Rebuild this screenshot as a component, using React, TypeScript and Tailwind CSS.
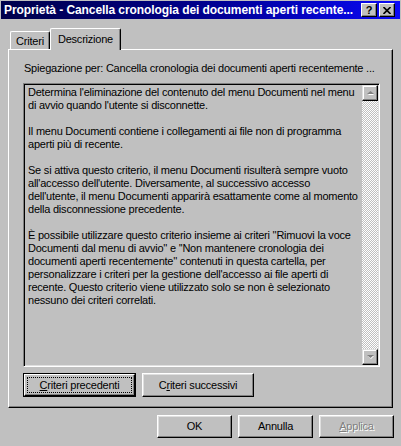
import type { ReactNode } from "react";

const lines = [
    "Determina l'eliminazione del contenuto del menu Documenti nel menu",
    "di avvio quando l'utente si disconnette.",
    "",
    "Il menu Documenti contiene i collegamenti ai file non di programma",
    "aperti più di recente.",
    "",
    "Se si attiva questo criterio, il menu Documenti risulterà sempre vuoto",
    "all'accesso dell'utente. Diversamente, al successivo accesso",
    "dell'utente, il menu Documenti apparirà esattamente come al momento",
    "della disconnessione precedente.",
    "",
    "È possibile utilizzare questo criterio insieme ai criteri ''Rimuovi la voce",
    "Documenti dal menu di avvio'' e ''Non mantenere cronologia dei",
    "documenti aperti recentemente'' contenuti in questa cartella, per",
    "personalizzare i criteri per la gestione dell'accesso ai file aperti di",
    "recente. Questo criterio viene utilizzato solo se non è selezionato",
    "nessuno dei criteri correlati.",
];

function Button({
    children,
    width,
    height,
    isDefault = false,
}: {
    children: ReactNode;
    width: string;
    height: string;
    isDefault?: boolean;
}) {
    if (isDefault) {
        return (
            <div className={`${width} ${height} border border-black`}>
                <div className="h-full w-full border-t border-l border-white border-r border-b border-r-black border-b-black shadow-[inset_-1px_-1px_0_#808080] p-[2px]">
                    <div className="h-full w-full border border-dotted border-black flex items-center justify-center">
                        {children}
                    </div>
                </div>
            </div>
        );
    }
    return (
        <div
            className={`${width} ${height} flex items-center justify-center border-t border-l border-white border-r border-b border-r-black border-b-black shadow-[inset_-1px_-1px_0_#808080,inset_1px_1px_0_#dfdfdf]`}
        >
            {children}
        </div>
    );
}

function ScrollArrow({ up }: { up: boolean }) {
    return (
        <div className="w-[16px] h-[16px] flex items-center justify-center border-t border-l border-[#dfdfdf] border-r border-b border-r-black border-b-black shadow-[inset_-1px_-1px_0_#808080,inset_1px_1px_0_#fff] bg-[#c0c0c0]">
            <svg width="7" height="4" viewBox="0 0 7 4">
                {up ? (
                    <>
                        <path d="M1 4 L4 1 L7 4 Z" fill="#fff" />
                        <path d="M0 3 L3.5 0 L7 3 Z" fill="#808080" />
                    </>
                ) : (
                    <>
                        <path d="M1 1 L7 1 L4 4 Z" fill="#fff" />
                        <path d="M0 0 L7 0 L3.5 3 Z" fill="#808080" />
                    </>
                )}
            </svg>
        </div>
    );
}

export default function App() {
    return (
        <div
            className="w-[401px] h-[446px] bg-[#c0c0c0] overflow-hidden text-black text-[11px] leading-[13px] tracking-[-0.22px]"
            style={{ fontFamily: '"Liberation Sans", Arial, sans-serif' }}
        >
            {/* title bar */}
            <div className="mx-px mt-px h-[18px] bg-gradient-to-r from-[#00004a] via-[#00008c] to-[#0a0af8] flex items-center pl-[3px] pr-[5px]">
                <span className="flex-1 font-bold text-white text-[12px] tracking-[-0.08px] whitespace-nowrap overflow-hidden">
                    Proprietà - Cancella cronologia dei documenti aperti recente...
                </span>
                <div className="flex gap-[2px]">
                    <div className="w-[16px] h-[14px] flex items-center justify-center border-t border-l border-white border-r border-b border-r-black border-b-black shadow-[inset_-1px_-1px_0_#808080] bg-[#c0c0c0] font-bold text-[11px] leading-none tracking-normal">
                        ?
                    </div>
                    <div className="w-[16px] h-[14px] flex items-center justify-center border-t border-l border-white border-r border-b border-r-black border-b-black shadow-[inset_-1px_-1px_0_#808080] bg-[#c0c0c0]">
                        <svg width="8" height="7" viewBox="0 0 8 7">
                            <path d="M0.5 0 L7.5 7 M7.5 0 L0.5 7" stroke="#000" strokeWidth="1.6" />
                        </svg>
                    </div>
                </div>
            </div>

            {/* tabs */}
            <div className="flex items-end pl-[10px] pt-[9px]">
                <div className="w-[40px] h-[18px] border-t border-l border-white border-r border-r-black shadow-[inset_-1px_0_0_#808080] rounded-tl-[2px] rounded-tr-[2px] flex items-center justify-center pt-px">
                    Criteri
                </div>
                <div className="relative z-10 -mb-px w-[71px] h-[22px] bg-[#c0c0c0] border-t border-l border-white border-r border-r-black shadow-[inset_-1px_0_0_#808080] rounded-tl-[2px] rounded-tr-[2px] flex items-start justify-center pt-[4px]">
                    Descrizione
                </div>
            </div>

            {/* panel */}
            <div className="ml-[8px] w-[385px] h-[359px] border-t border-l border-white border-r border-b border-r-black border-b-black shadow-[inset_-1px_-1px_0_#808080] pl-[14px] pt-[12px]">
                <div className="pl-px whitespace-nowrap">
                    Spiegazione per: Cancella cronologia dei documenti aperti recentemente ...
                </div>

                <div className="mt-[8px] w-[357px] h-[284px] border-t border-l border-[#808080] border-r border-b border-r-white border-b-white shadow-[inset_1px_1px_0_#000,inset_-1px_-1px_0_#dfdfdf] p-px flex">
                    <div className="flex-1 pl-[3px] pt-px whitespace-nowrap overflow-hidden">
                        {lines.map((l, i) => (
                            <div key={i} className="h-[13px]">
                                {l}
                            </div>
                        ))}
                    </div>
                    <div className="w-[16px] flex flex-col">
                        <ScrollArrow up />
                        <div className="flex-1 bg-[repeating-conic-gradient(#ffffff_0_25%,#c0c0c0_0_50%)] bg-[length:2px_2px]" />
                        <ScrollArrow up={false} />
                    </div>
                </div>

                <div className="mt-[6px] flex gap-[6px]">
                    <Button width="w-[113px]" height="h-[24px]" isDefault>
                        <span>
                            <u className="underline-offset-[1px]">C</u>riteri precedenti
                        </span>
                    </Button>
                    <Button width="w-[112px]" height="h-[24px]">
                        <span>
                            C<u className="underline-offset-[1px]">r</u>iteri successivi
                        </span>
                    </Button>
                </div>
            </div>

            {/* bottom buttons */}
            <div className="mt-[7px] pr-[7px] flex justify-end gap-[6px]">
                <Button width="w-[75px]" height="h-[23px]">
                    OK
                </Button>
                <Button width="w-[75px]" height="h-[23px]">
                    Annulla
                </Button>
                <Button width="w-[75px]" height="h-[23px]">
                    <span className="text-[#808080] [text-shadow:1px_1px_0_#fff]">
                        <u className="underline-offset-[1px]">A</u>pplica
                    </span>
                </Button>
            </div>
        </div>
    );
}
